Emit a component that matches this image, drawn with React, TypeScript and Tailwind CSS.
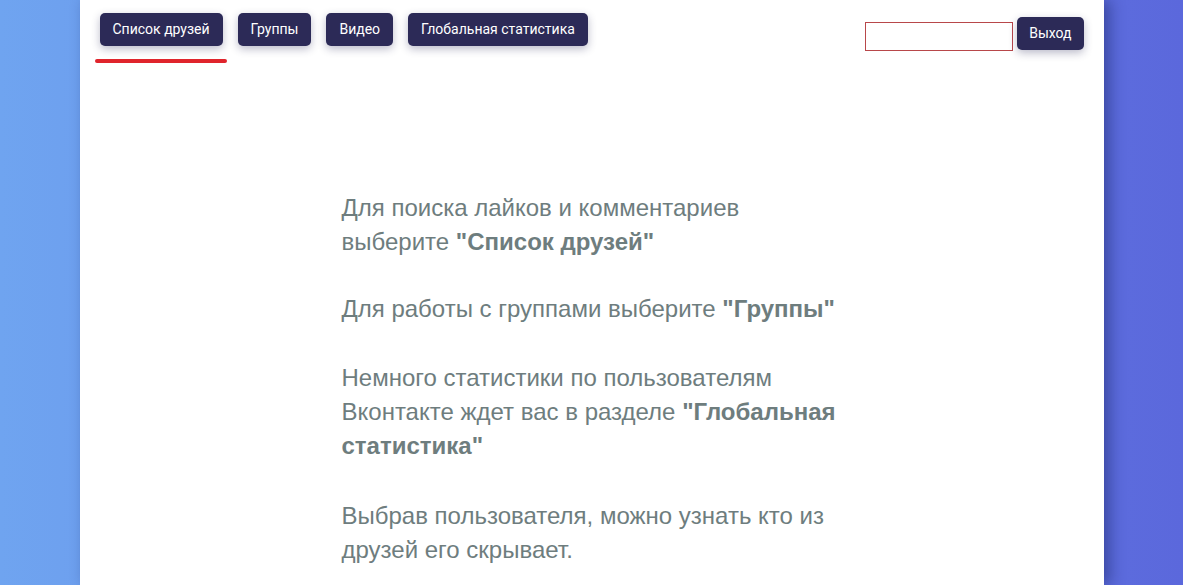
import React from 'react';

const navItems = ['Список друзей', 'Группы', 'Видео', 'Глобальная статистика'];

const App: React.FC = () => {
  return (
    <div className="min-h-screen w-full bg-gradient-to-r from-[#6fa4f0] to-[#5b68dc] font-['Liberation_Sans',Arial,sans-serif]">
      <div className="mx-auto min-h-screen w-[1024px] bg-white shadow-[6px_0_14px_rgba(20,30,90,0.45)]">
        {/* Header */}
        <header className="flex items-start justify-between px-5 pt-[13px]">
          <nav className="flex gap-[15px]">
            {navItems.map((item, index) => (
              <div key={item} className="relative">
                <button className="h-[33px] rounded-[5px] bg-[#2c2a57] px-[13px] font-['Roboto',sans-serif] text-[14px] text-white shadow-[0_3px_8px_rgba(30,30,80,0.3)]">
                  {item}
                </button>
                {index === 0 && (
                  <span className="absolute -left-[5px] -right-[4px] top-[46px] h-[4px] rounded-full bg-[#e0242c]" />
                )}
              </div>
            ))}
          </nav>
          <div className="flex items-start gap-1">
            <input
              type="text"
              className="mt-[9px] h-[29px] w-[148px] border border-[#b8474a] bg-white outline-none"
            />
            <button className="mt-[4px] h-[33px] rounded-[5px] bg-[#2c2a57] px-[12px] font-['Roboto',sans-serif] text-[14px] text-white shadow-[0_3px_8px_rgba(30,30,80,0.3)]">
              Выход
            </button>
          </div>
        </header>

        {/* Intro text */}
        <main className="mx-auto mt-[140px] w-[500px] text-[24px] leading-[34px] text-[#6e7d7e]">
          <p className="mb-[33px]">
            Для поиска лайков и комментариев выберите <b>"Список друзей"</b>
          </p>
          <p className="mb-[35px]">
            Для работы с группами выберите <b>"Группы"</b>
          </p>
          <p className="mb-[36px]">
            Немного статистики по пользователям Вконтакте ждет вас в разделе{' '}
            <b>"Глобальная статистика"</b>
          </p>
          <p>Выбрав пользователя, можно узнать кто из друзей его скрывает.</p>
        </main>
      </div>
    </div>
  );
};

export default App;
